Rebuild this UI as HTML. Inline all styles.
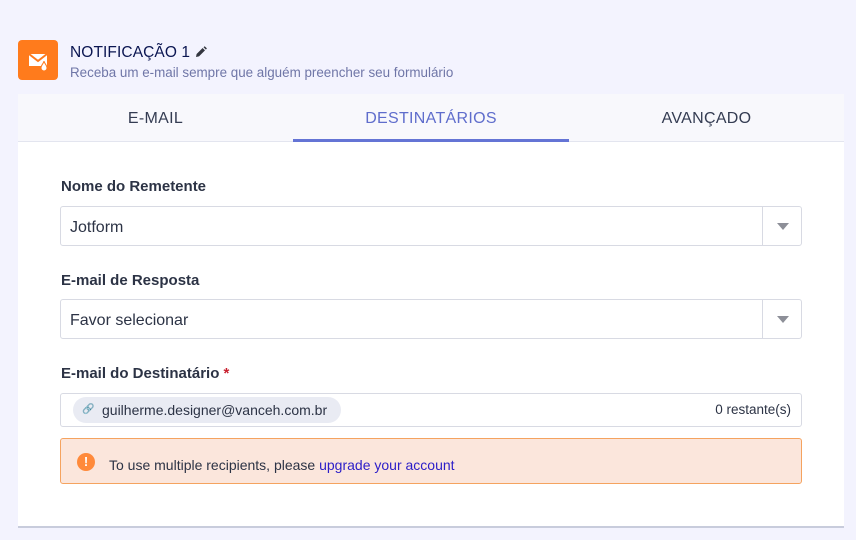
<!DOCTYPE html>
<html><head><meta charset="utf-8"><style>
*{box-sizing:border-box;margin:0;padding:0}
body{width:856px;height:540px;overflow:hidden;background:#f3f3fe;font-family:"Liberation Sans",sans-serif;position:relative;color:#2c3345}
.icon{position:absolute;left:18px;top:40px;width:40px;height:40px;background:#ff7b1c;border-radius:4px}
.title{position:absolute;left:70px;top:44px;font-size:15.5px;color:#0a1551;font-weight:500;letter-spacing:.1px}
.sub{position:absolute;left:70px;top:65px;font-size:13.4px;color:#6f76a7}
.card{position:absolute;left:18px;top:94px;width:826px;height:434px;background:#fff;border-bottom:2px solid #c8ccdc}
.tabs{height:48px;background:#f8f8fc;border-bottom:1px solid #e3e5ef;position:relative}
.tab{position:absolute;top:0;height:48px;line-height:50px;text-align:center;font-size:16px;color:#343c52;letter-spacing:.3px}
.tab.act{color:#5f6dcc;border-bottom:3px solid #6474d5}
.lbl{position:absolute;left:43px;font-size:15px;font-weight:bold;color:#2c3345}
.inp{position:absolute;left:42px;width:742px;height:40px;border:1px solid #d8dae3;border-radius:3px;font-size:16px;line-height:41px;padding-left:9px;color:#2c3345}
.dd{position:absolute;right:0;top:0;width:39px;height:38px;border-left:1px solid #d8dae3}
.dd:after{content:"";position:absolute;left:14px;top:16px;border-left:6px solid transparent;border-right:6px solid transparent;border-top:7px solid #8d8f98}
.chip{position:absolute;left:12px;top:3px;height:26px;width:268px;background:#e9ebf3;border-radius:13px;font-size:14px;line-height:26px;padding-left:29px;color:#2c3345}
.warn{position:absolute;left:42px;top:344px;width:742px;height:46px;background:#fbe6dc;border:1px solid #f5a35f;border-radius:3px;font-size:14px;line-height:52px;padding-left:48px;color:#2c3345}
.warn a{color:#2c1ec8;text-decoration:none}
.ex{position:absolute;left:16px;top:14px;width:18px;height:18px;border-radius:50%;background:#ff8a3b;color:#fff;font-size:13px;font-weight:bold;line-height:18px;text-align:center}
</style></head><body>
<div class="icon"><svg width="40" height="40" viewBox="0 0 40 40"><path d="M11 14h18v12H11z" fill="#fff"/><path d="M11 14l9 7 9-7" fill="none" stroke="#ff7b1c" stroke-width="2"/><path d="M23 28c0-3 3-5 3-7 0 2 3 4 3 7a3 3 0 0 1-6 0z" fill="#fff" stroke="#ff7b1c" stroke-width="1"/></svg></div>
<div class="title">NOTIFICAÇÃO 1 <svg width="12" height="12" viewBox="0 0 12 12" style="vertical-align:-1px"><path d="M1 11l.6-3 6-6 2.4 2.4-6 6z M8.5 1.2l1.2-1 2.2 2.2-1 1.2z" fill="#33363f"/></svg></div>
<div class="sub">Receba um e-mail sempre que alguém preencher seu formulário</div>
<div class="card">
 <div class="tabs">
  <div class="tab" style="left:0;width:275px">E-MAIL</div>
  <div class="tab act" style="left:275px;width:276px">DESTINATÁRIOS</div>
  <div class="tab" style="left:551px;width:275px">AVANÇADO</div>
 </div>
 <div class="lbl" style="top:84px">Nome do Remetente</div>
 <div class="inp" style="top:112px">Jotform<div class="dd"></div></div>
 <div class="lbl" style="top:178px">E-mail de Resposta</div>
 <div class="inp" style="top:205px">Favor selecionar<div class="dd"></div></div>
 <div class="lbl" style="top:271px">E-mail do Destinatário <span style="color:#c8202e">*</span></div>
 <div class="inp" style="top:299px;height:34px;line-height:32px">
  <div class="chip"><span style="position:absolute;left:9px;top:0;font-size:10px;color:#666">&#128279;</span>guilherme.designer@vanceh.com.br</div>
  <span style="position:absolute;right:10px;top:0;font-size:13.5px">0 restante(s)</span>
 </div>
 <div class="warn"><div class="ex">!</div>To use multiple recipients, please <a>upgrade your account</a></div>
</div>
</body></html>
